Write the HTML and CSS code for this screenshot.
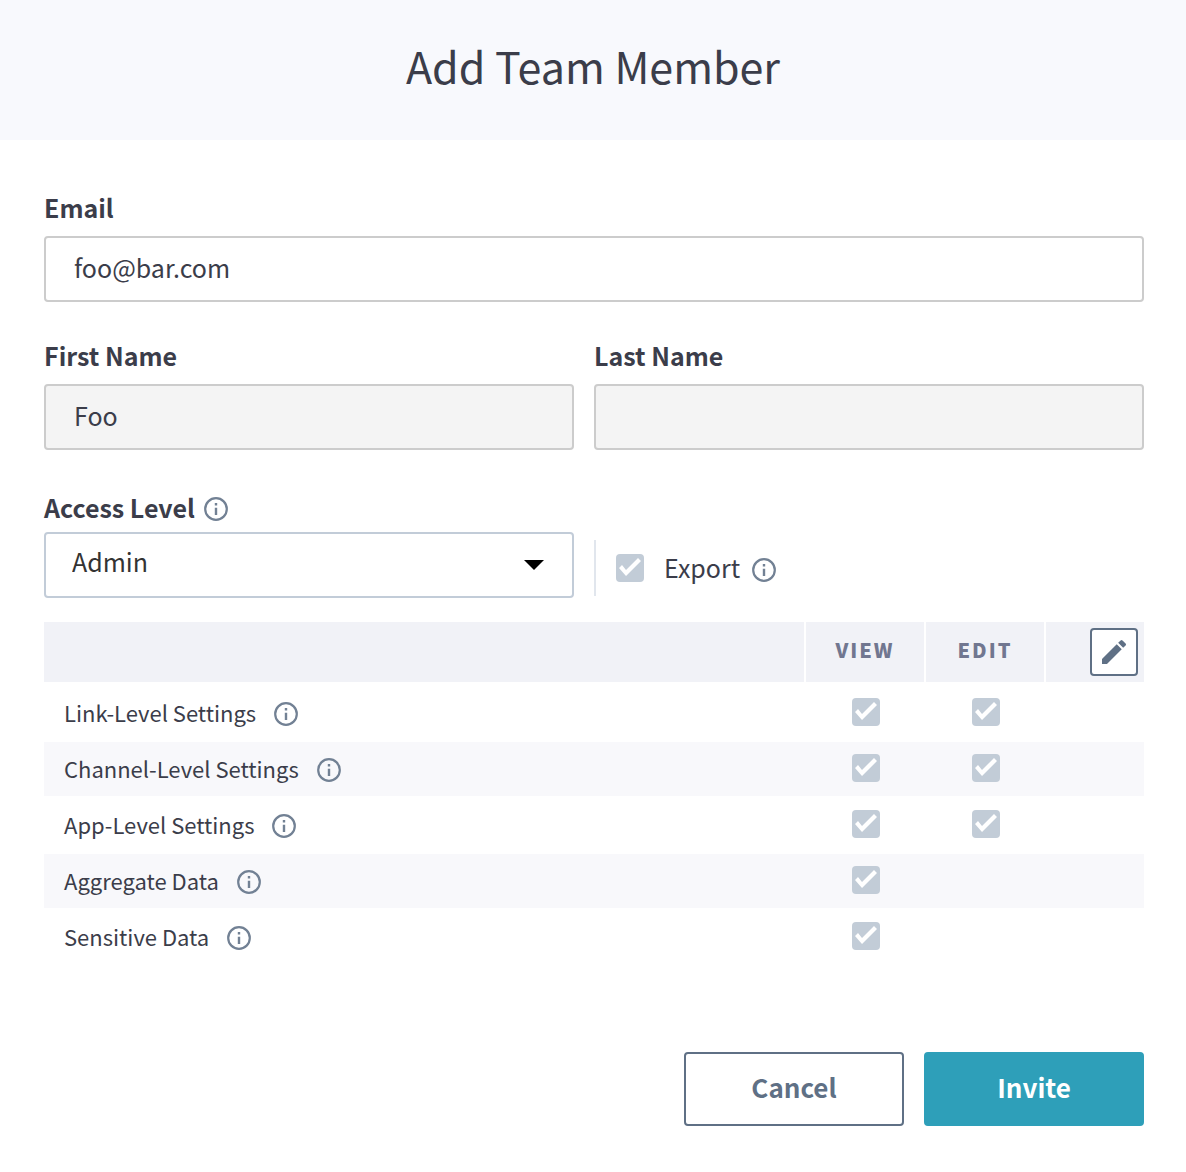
FILE: index.html
```html
<!DOCTYPE html>
<html lang="en">
<head>
<meta charset="utf-8">
<meta name="viewport" content="width=device-width, initial-scale=1">
<title>Add Team Member</title>
<link rel="stylesheet" href="styles.css">
</head>
<body>
<svg class="sprite" aria-hidden="true">
  <symbol id="info" viewBox="0 0 24 24">
    <circle cx="12" cy="12" r="10.8" fill="none" stroke="currentColor" stroke-width="2.2"/>
    <path fill="currentColor" d="M10.8 10.8h2.4V18h-2.4zM10.8 6h2.4v2.4h-2.4z"/>
  </symbol>
</svg>
<header class="header"><h1 class="title">Add Team Member</h1></header>
<form class="form">
  <div class="field">
    <label class="label" for="email">Email</label>
    <input class="input" id="email" type="email" value="foo@bar.com">
  </div>
  <div class="columns names">
    <div class="field">
      <label class="label" for="first">First Name</label>
      <input class="input" id="first" type="text" value="Foo" disabled>
    </div>
    <div class="field">
      <label class="label" for="last">Last Name</label>
      <input class="input" id="last" type="text" disabled>
    </div>
  </div>
  <div class="columns access">
    <div class="field">
      <div class="label-row">
        <label class="label" for="level">Access Level</label>
        <svg class="info"><use href="#info"/></svg>
      </div>
      <div class="select-box">
        <select class="select" id="level"><option>Admin</option></select>
        <svg class="arrow" viewBox="0 0 20 10"><path d="M0 0h20L10 10z"/></svg>
      </div>
    </div>
    <div class="export">
      <input class="check" id="export" type="checkbox" checked disabled>
      <label class="export-label" for="export">Export</label>
      <svg class="info"><use href="#info"/></svg>
    </div>
  </div>
  <table class="table">
    <thead>
      <tr>
        <th class="name-col"><span class="hidden">Permission</span></th>
        <th class="check-col" scope="col">VIEW</th>
        <th class="check-col" scope="col">EDIT</th>
        <th class="tool-col">
          <button class="edit" type="button" aria-label="Edit permissions">
            <svg class="pencil" viewBox="0 0 24 24"><path fill="currentColor" d="M3 17.25V21h3.75L17.81 9.94l-3.75-3.75L3 17.25zM20.71 7.04a1 1 0 0 0 0-1.41l-2.34-2.34a1 1 0 0 0-1.41 0l-1.83 1.83 3.75 3.75 1.83-1.83z"/></svg>
          </button>
        </th>
      </tr>
    </thead>
    <tbody>
      <tr>
        <td><div class="name">Link-Level Settings<svg class="info"><use href="#info"/></svg></div></td>
        <td><input class="check" type="checkbox" aria-label="View link-level settings" checked disabled></td>
        <td><input class="check" type="checkbox" aria-label="Edit link-level settings" checked disabled></td>
        <td></td>
      </tr>
      <tr>
        <td><div class="name">Channel-Level Settings<svg class="info"><use href="#info"/></svg></div></td>
        <td><input class="check" type="checkbox" aria-label="View channel-level settings" checked disabled></td>
        <td><input class="check" type="checkbox" aria-label="Edit channel-level settings" checked disabled></td>
        <td></td>
      </tr>
      <tr>
        <td><div class="name">App-Level Settings<svg class="info"><use href="#info"/></svg></div></td>
        <td><input class="check" type="checkbox" aria-label="View app-level settings" checked disabled></td>
        <td><input class="check" type="checkbox" aria-label="Edit app-level settings" checked disabled></td>
        <td></td>
      </tr>
      <tr>
        <td><div class="name">Aggregate Data<svg class="info"><use href="#info"/></svg></div></td>
        <td><input class="check" type="checkbox" aria-label="View aggregate data" checked disabled></td>
        <td></td>
        <td></td>
      </tr>
      <tr>
        <td><div class="name">Sensitive Data<svg class="info"><use href="#info"/></svg></div></td>
        <td><input class="check" type="checkbox" aria-label="View sensitive data" checked disabled></td>
        <td></td>
        <td></td>
      </tr>
    </tbody>
  </table>
  <div class="actions">
    <button class="button" type="button">Cancel</button>
    <button class="button primary" type="submit">Invite</button>
  </div>
</form>
</body>
</html>
```

FILE: styles.css
```css
* { box-sizing: border-box; }

body {
  margin: 0;
  background: #fff;
  color: #3b3d4a;
  font-family: "Noto Sans CJK SC", "Noto Sans", sans-serif;
  font-size: 25px;
  line-height: 36px;
}

input, select, button { font: inherit; color: inherit; margin: 0; }

.sprite { position: absolute; width: 0; height: 0; }
.hidden { position: absolute; width: 1px; height: 1px; overflow: hidden; opacity: 0; }

.header { padding: 33px 20px 43px; background: #f8f9fd; text-align: center; }
.title { margin: 0; font-size: 43px; line-height: 64px; font-weight: 400; }

.form { padding: 49px 42px 46px 44px; }
.field { display: flex; flex-direction: column; gap: 11px; }
.label { font-weight: 700; }

.input {
  width: 100%;
  height: 66px;
  padding: 0 28px 4px;
  border: 2px solid #ccc;
  border-radius: 4px;
  background: #fff;
}
.input:disabled { background: #f4f4f4; }

.columns { display: grid; grid-template-columns: 53fr 55fr; gap: 20px; }
.names { margin-top: 35px; }
.access { margin-top: 39px; align-items: end; }
.access .field { gap: 7px; }
.label-row { display: flex; align-items: center; gap: 9px; }
.info { flex: none; width: 24px; height: 24px; color: #728194; }
.label-row .info, .export .info { margin-top: 4px; }

.select-box { position: relative; }
.select {
  display: block;
  width: 100%;
  height: 66px;
  padding: 0 60px 8px 26px;
  appearance: none;
  border: 2px solid #c2ccd8;
  border-radius: 4px;
  background: #fff;
  color: #333;
}
.arrow { position: absolute; right: 30px; top: 28px; width: 20px; height: 10px; pointer-events: none; }

.export {
  display: flex;
  align-items: center;
  height: 56px;
  margin-bottom: 2px;
  padding-left: 20px;
  border-left: 2px solid #e1e6ed;
}
.export-label { margin: 0 12px 0 20px; padding-bottom: 2px; }

.check {
  display: block;
  flex: none;
  width: 28px;
  height: 28px;
  appearance: none;
  border-radius: 4px;
  background: #c2ccd7;
}
.check:checked::before {
  content: "";
  display: block;
  height: 28px;
  background: #fff;
  clip-path: polygon(3px 14px, 6px 11px, 10px 16px, 22px 4px, 25px 7px, 10px 22px);
}

.table { width: 100%; margin-top: 24px; border-collapse: separate; border-spacing: 0; table-layout: fixed; }
th {
  height: 60px;
  padding: 0 0 4px;
  background: #f1f2f7;
  color: #717790;
  font-size: 20px;
  font-weight: 900;
  letter-spacing: 2px;
}
th + th { border-left: 2px solid #fff; }
.check-col { width: 120px; }
.tool-col { width: 100px; padding: 6px; }

.edit {
  display: flex;
  align-items: center;
  justify-content: center;
  width: 48px;
  height: 48px;
  margin-left: auto;
  padding: 0;
  border: 2px solid #5f7085;
  border-radius: 4px;
  background: #fff;
  color: #5f7085;
}
.pencil { width: 32px; height: 32px; }

td { height: 56px; padding: 12px 0 14px; border-top: 2px solid #fff; }
tbody tr:first-child td { height: 58px; border-top-width: 4px; }
tbody tr:nth-child(even) td { background: #f8f8fb; }
td .check { margin: 0 auto; position: relative; left: 2px; }
.name { display: flex; align-items: center; gap: 18px; height: 28px; padding-left: 20px; font-size: 22px; }
.name .info { margin-top: 4px; }

.actions { display: flex; justify-content: flex-end; gap: 20px; margin-top: 88px; }
.button {
  width: 220px;
  height: 74px;
  padding: 0 0 4px;
  border: 2px solid #5f7085;
  border-radius: 4px;
  background: #fff;
  color: #5f7085;
  font-size: 26px;
  font-weight: 700;
}
.primary { border-color: #2e9fb9; background: #2e9fb9; color: #fff; }
```
